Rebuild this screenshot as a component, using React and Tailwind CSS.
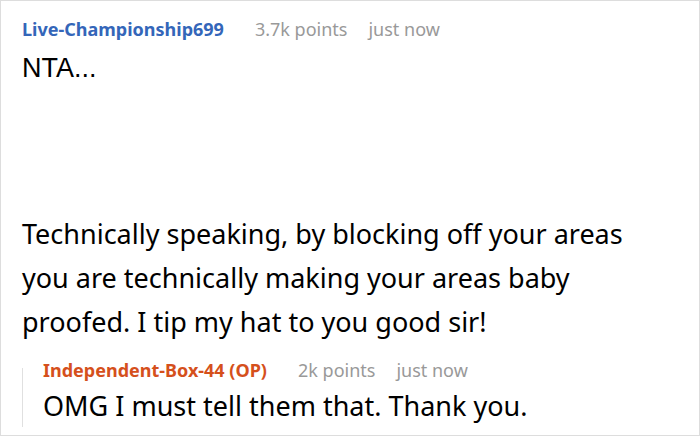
import React from "react";

const noto = { fontFamily: '"Noto Sans", "Open Sans", sans-serif' };
const arial = { fontFamily: '"Liberation Sans", Arial, sans-serif' };

const Meta = ({ name, color, points }) => (
  <div className="flex items-baseline text-[18px] leading-[24px]">
    <span className={`font-bold ${color}`}>{name}</span>
    <span className="ml-[31px] text-[#999999]">{points}</span>
    <span className="ml-[21px] text-[#999999]">just now</span>
  </div>
);

export default function App() {
  return (
    <div
      className="w-[700px] h-[436px] bg-white border border-[#dddddd] overflow-hidden text-black"
      style={noto}
    >
      <div className="pl-[21px] pt-[16px]">
        <Meta name="Live-Championship699" color="text-[#3466b9]" points="3.7k points" />
        <p className="mt-[5px] text-[27px] leading-[44px]" style={arial}>
          NTA...
        </p>
        <div className="mt-[122px] text-[27px] leading-[44px]">
          <p>Technically speaking, by blocking off your areas</p>
          <p>you are technically making your areas baby</p>
          <p>proofed. I tip my hat to you good sir!</p>
        </div>
        <div className="mt-[14px] flex">
          <div className="w-px h-[59px] mt-[10px] bg-[#e0e0e0]" />
          <div className="pl-[20px]">
            <Meta name="Independent-Box-44 (OP)" color="text-[#d5501c]" points="2k points" />
            <p className="mt-[6px] text-[27px] leading-[36px]">
              OMG I must tell them that. Thank you.
            </p>
          </div>
        </div>
      </div>
    </div>
  );
}
